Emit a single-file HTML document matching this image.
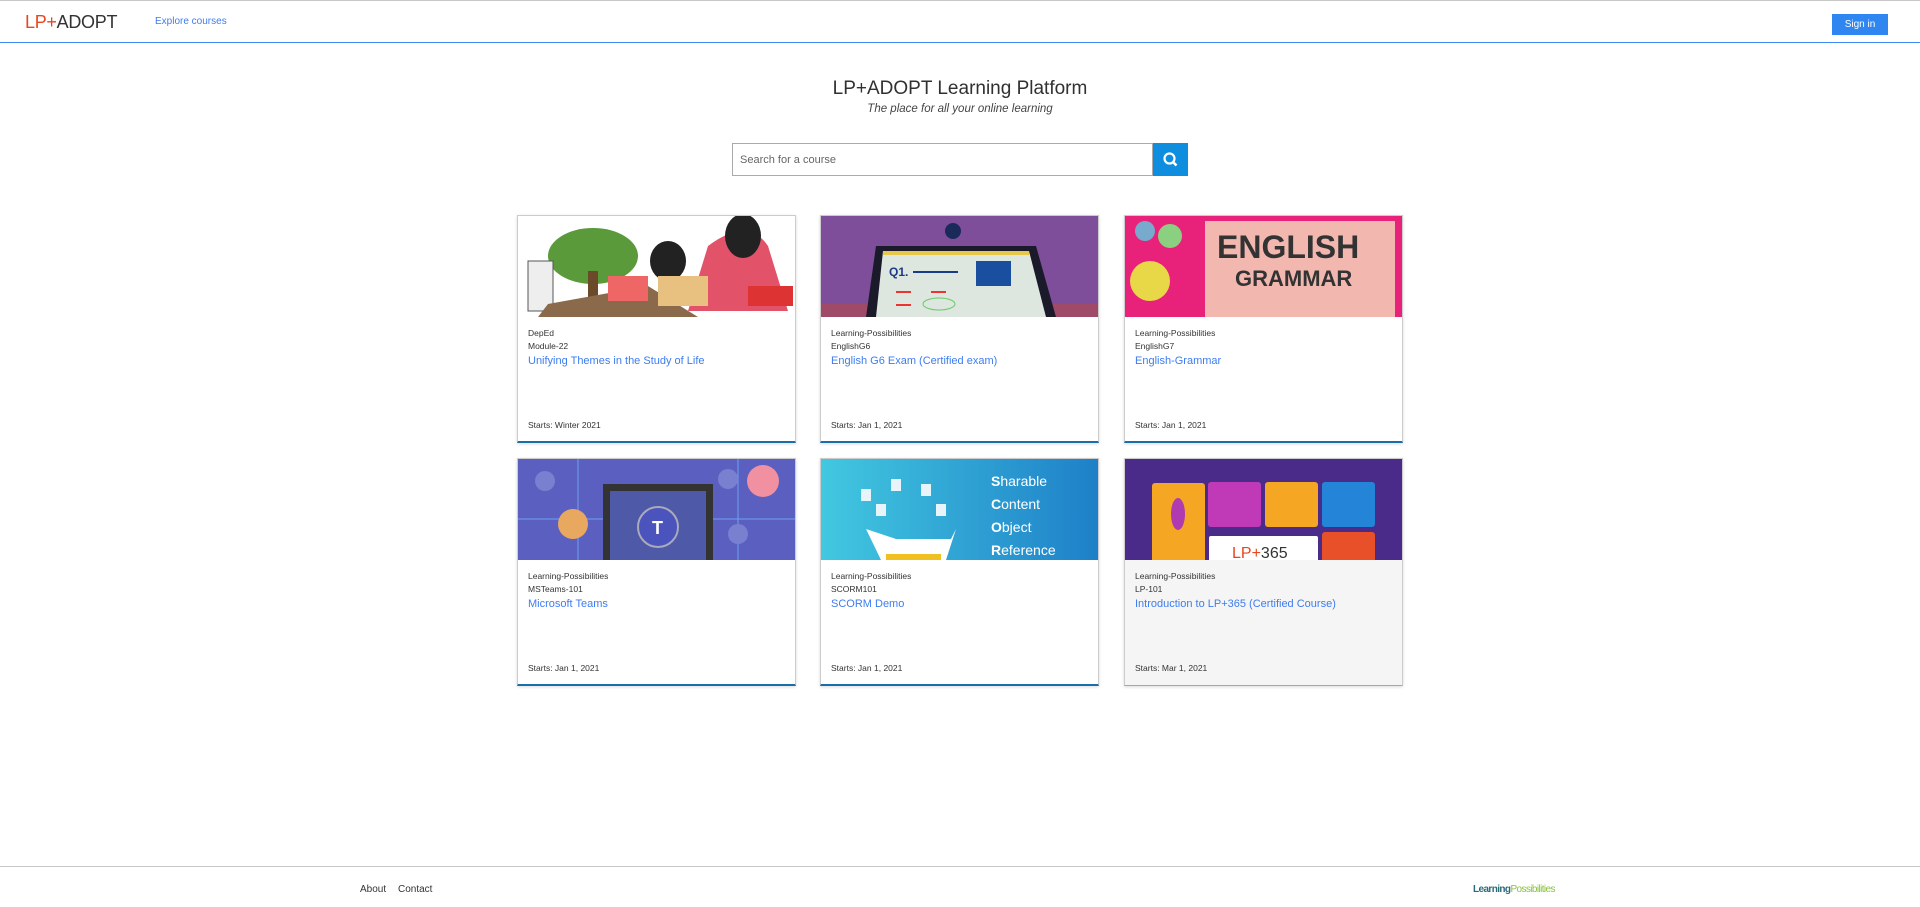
<!DOCTYPE html>
<html><head><meta charset="utf-8"><style>
*{box-sizing:border-box;margin:0;padding:0}
body{width:1920px;height:907px;background:#fff;font-family:"Liberation Sans",sans-serif;position:relative;overflow:hidden;color:#333}
.hdr{position:absolute;left:0;top:0;width:1920px;height:43px;border-top:1px solid #c8c8c8;border-bottom:1px solid #3d8bf5}
.logo{position:absolute;left:25px;top:11px;font-size:18px;letter-spacing:-0.3px;color:#333}
.logo b{color:#e8461e;font-weight:normal}
.nav{position:absolute;left:155px;top:15px;font-size:10px;color:#3d7cf0}
.btn{position:absolute;left:1832px;top:13px;width:56px;height:21px;background:#2f86f0;color:#fff;font-size:10px;text-align:center;line-height:21px}
h1{position:absolute;top:78px;width:1920px;text-align:center;font-size:19px;font-weight:normal;color:#313131}
.sub{position:absolute;top:103px;width:1920px;text-align:center;font-size:11.5px;font-style:italic;color:#444}
.search{position:absolute;left:732px;top:143px;width:421px;height:33px;border:1px solid #aaa;font-size:11px;color:#666;padding:10px 7px}
.sbtn{position:absolute;left:1153px;top:143px;width:35px;height:33px;background:#0f8ee0}
.card{position:absolute;width:279px;height:228px;border:1px solid #ccc;border-bottom:2px solid #1a6fa8;background:#fff;box-shadow:0 1px 3px rgba(0,0,0,.15)}
.card svg{display:block;width:277px;height:101px}
.org{position:absolute;left:10px;top:111px;font-size:8.5px;color:#333;line-height:13px}
.ttl{position:absolute;left:10px;top:139px;font-size:11px;color:#3d7cf0}
.st{position:absolute;left:10px;top:204px;font-size:8.5px;color:#333}
.foot{position:absolute;left:0;top:866px;width:1920px;border-top:1px solid #c8c8c8}
.fl{position:absolute;top:884px;font-size:10px;color:#333}
</style></head><body>
<div class="hdr"><div class="logo"><b>LP+</b>ADOPT</div><div class="nav">Explore courses</div><div class="btn">Sign in</div></div>
<h1>LP+ADOPT Learning Platform</h1>
<div class="sub">The place for all your online learning</div>
<div class="search">Search for a course</div>
<div class="sbtn"><svg width="35" height="33"><circle cx="16.5" cy="15.5" r="5" fill="none" stroke="#fff" stroke-width="2.2"/><line x1="20" y1="19" x2="23.5" y2="22.5" stroke="#fff" stroke-width="2.6"/></svg></div>

<div class="card" style="left:517px;top:215px"><svg viewBox="0 0 277 101"><rect width="277" height="101" fill="#fff"/><ellipse cx="75" cy="40" rx="45" ry="28" fill="#5a9a3a"/><rect x="70" y="55" width="10" height="40" fill="#6b4a2a"/><rect x="10" y="45" width="25" height="50" fill="#eee" stroke="#555"/><path d="M30 88 L130 70 L180 101 L20 101Z" fill="#8a6a4a"/><path d="M190 30 Q230 0 250 30 L270 95 L170 95Z" fill="#e2536a"/><ellipse cx="225" cy="20" rx="18" ry="22" fill="#222"/><ellipse cx="150" cy="45" rx="18" ry="20" fill="#222"/><rect x="90" y="60" width="40" height="25" fill="#e66"/><rect x="140" y="60" width="50" height="30" fill="#e8c080"/><rect x="230" y="70" width="45" height="20" fill="#d33"/></svg>
<div class="org">DepEd<br>Module-22</div><div class="ttl">Unifying Themes in the Study of Life</div><div class="st">Starts: Winter 2021</div></div>

<div class="card" style="left:820px;top:215px"><svg viewBox="0 0 277 101"><rect width="277" height="101" fill="#7e4e9a"/><rect y="88" width="277" height="13" fill="#a04a6a"/><path d="M55 30 L215 30 L235 101 L45 101Z" fill="#1a1a2a"/><path d="M62 35 L208 35 L225 101 L55 101Z" fill="#dde6df"/><rect x="62" y="35" width="146" height="4" fill="#e8c84a"/><rect x="155" y="45" width="35" height="25" fill="#1a4fa0"/><circle cx="132" cy="15" r="8" fill="#1a2a5a"/><text x="68" y="60" font-size="12" font-weight="bold" fill="#1a3a8a" font-family="Liberation Sans">Q1.</text><rect x="92" y="55" width="45" height="2" fill="#1a3a8a"/><rect x="75" y="75" width="15" height="2" fill="#e33"/><rect x="110" y="75" width="15" height="2" fill="#e33"/><rect x="75" y="88" width="15" height="2" fill="#e33"/><ellipse cx="118" cy="88" rx="16" ry="6" fill="none" stroke="#6c6"/></svg>
<div class="org">Learning-Possibilities<br>EnglishG6</div><div class="ttl">English G6 Exam (Certified exam)</div><div class="st">Starts: Jan 1, 2021</div></div>

<div class="card" style="left:1124px;top:215px"><svg viewBox="0 0 277 101"><rect width="277" height="101" fill="#e8227a"/><rect x="80" y="5" width="190" height="96" fill="#f2b8b0"/><text x="92" y="42" font-size="32" font-weight="bold" fill="#333" font-family="Liberation Sans">ENGLISH</text><text x="110" y="70" font-size="22" font-weight="bold" fill="#333" font-family="Liberation Sans">GRAMMAR</text><circle cx="25" cy="65" r="20" fill="#e8d848"/><circle cx="45" cy="20" r="12" fill="#8ad080"/><circle cx="20" cy="15" r="10" fill="#7ac"/></svg>
<div class="org">Learning-Possibilities<br>EnglishG7</div><div class="ttl">English-Grammar</div><div class="st">Starts: Jan 1, 2021</div></div>

<div class="card" style="left:517px;top:458px"><svg viewBox="0 0 277 101"><rect width="277" height="101" fill="#5b5fbf"/><path d="M0 60 H277 M60 0 V101 M220 0 V101" stroke="#6fa0f0" stroke-width="1"/><rect x="85" y="25" width="110" height="76" fill="#333"/><rect x="92" y="32" width="96" height="69" fill="#4e5aa8"/><circle cx="140" cy="68" r="20" fill="#4b53bc" stroke="#aab" stroke-width="2"/><text x="134" y="75" font-size="18" font-weight="bold" fill="#fff" font-family="Liberation Sans">T</text><circle cx="55" cy="65" r="15" fill="#e8a860"/><circle cx="245" cy="22" r="16" fill="#f090a0"/><circle cx="27" cy="22" r="10" fill="#7a80d0"/><circle cx="210" cy="20" r="10" fill="#7a80d0"/><circle cx="220" cy="75" r="10" fill="#7a80d0"/></svg>
<div class="org">Learning-Possibilities<br>MSTeams-101</div><div class="ttl">Microsoft Teams</div><div class="st">Starts: Jan 1, 2021</div></div>

<div class="card" style="left:820px;top:458px"><svg viewBox="0 0 277 101"><defs><linearGradient id="g" x1="0" x2="1"><stop offset="0" stop-color="#42c8e0"/><stop offset="1" stop-color="#1e80c8"/></linearGradient></defs><rect width="277" height="101" fill="url(#g)"/><path d="M60 101 L45 70 L75 80 L130 80 L135 70 L125 101Z" fill="#fff"/><rect x="65" y="95" width="55" height="6" fill="#f0c020"/><g fill="#fff" font-family="Liberation Sans" font-size="14"><text x="170" y="27"><tspan font-weight="bold">S</tspan>harable</text><text x="170" y="50"><tspan font-weight="bold">C</tspan>ontent</text><text x="170" y="73"><tspan font-weight="bold">O</tspan>bject</text><text x="170" y="96"><tspan font-weight="bold">R</tspan>eference</text></g><g fill="#e8f4fa"><rect x="40" y="30" width="10" height="12"/><rect x="70" y="20" width="10" height="12"/><rect x="100" y="25" width="10" height="12"/><rect x="55" y="45" width="10" height="12"/><rect x="115" y="45" width="10" height="12"/></g></svg>
<div class="org">Learning-Possibilities<br>SCORM101</div><div class="ttl">SCORM Demo</div><div class="st">Starts: Jan 1, 2021</div></div>

<div class="card" style="left:1124px;top:458px;background:#f5f5f5;border-bottom:1px solid #9ab"><svg viewBox="0 0 277 101"><rect width="277" height="101" fill="#4b2b8a"/><rect x="27" y="24" width="53" height="93" rx="3" fill="#f5a623"/><rect x="83" y="23" width="53" height="45" rx="3" fill="#c03ab8"/><rect x="140" y="23" width="53" height="45" rx="3" fill="#f5a623"/><rect x="197" y="23" width="53" height="45" rx="3" fill="#2384d8"/><rect x="197" y="73" width="53" height="45" rx="3" fill="#e8502a"/><rect x="84" y="77" width="109" height="40" rx="2" fill="#fff"/><text x="107" y="99" font-size="16" fill="#e8461e" font-family="Liberation Sans">LP+<tspan fill="#333">365</tspan></text><ellipse cx="53" cy="55" rx="7" ry="16" fill="#b03ab0"/></svg>
<div class="org">Learning-Possibilities<br>LP-101</div><div class="ttl">Introduction to LP+365 (Certified Course)</div><div class="st">Starts: Mar 1, 2021</div></div>

<div class="foot"></div>
<div class="fl" style="left:360px">About</div><div class="fl" style="left:398px">Contact</div>
<div class="fl" style="left:1473px;font-size:10px;letter-spacing:-0.6px;color:#2a6a7a;font-weight:bold">Learning<span style="color:#8ac040;font-weight:normal">Possibilities</span></div>
</body></html>
